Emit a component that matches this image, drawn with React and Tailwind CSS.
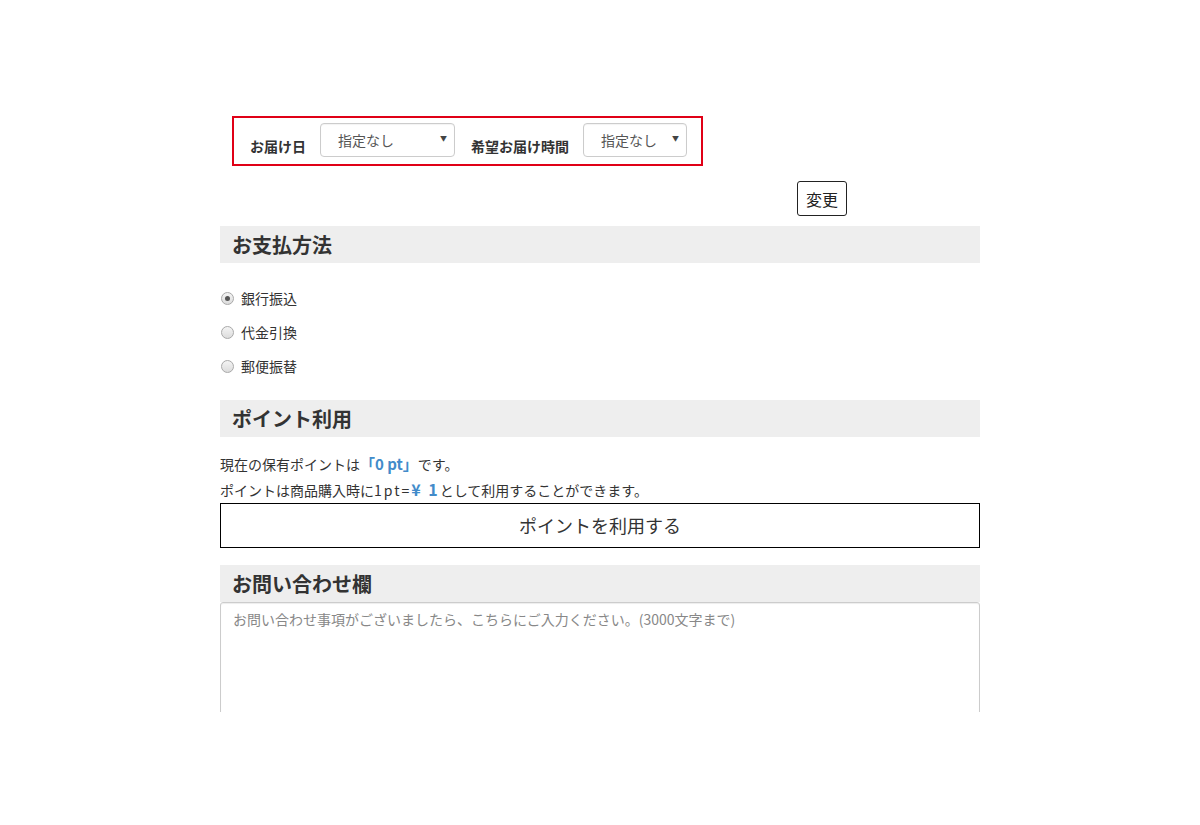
import React from "react";

function Select({ w }) {
  return (
    <div className={`relative flex h-[34px] ${w} items-center rounded-[4px] border border-[#cccccc] bg-white pl-[17px] text-[14px] text-[#555555] shadow-[inset_0_1px_1px_rgba(0,0,0,0.05)]`}>
      <span>指定なし</span>
      <span className="absolute right-[7px] top-[9px] text-[7px] leading-[10px] text-[#444]">▼</span>
    </div>
  );
}

function Radio({ checked, label }) {
  return (
    <label className="flex h-[34px] items-center gap-[7px] text-[14px] text-[#333]">
      <span className="flex h-[13px] w-[13px] items-center justify-center rounded-full border border-[#a9a9a9] bg-gradient-to-b from-[#f4f4f4] to-[#dcdcdc]">
        {checked && <span className="h-[5px] w-[5px] rounded-full bg-[#555]" />}
      </span>
      <span>{label}</span>
    </label>
  );
}

function Header({ children }) {
  return (
    <div className="flex h-[37px] items-center bg-[#eeeeee] px-[12px] text-[20px] font-bold text-[#333]">
      {children}
    </div>
  );
}

export default function App() {
  return (
    <div
      className="h-[712px] w-[1200px] overflow-hidden bg-white text-[#333]"
      style={{ fontFamily: '"Noto Sans CJK JP", "Noto Sans", sans-serif' }}
    >
      <div className="mx-auto w-[760px] pt-[116px]">
        <div className="ml-[12px] flex h-[50px] w-[471px] items-start border-2 border-[#e00016] pl-[16px] pt-[5px]">
          <span className="mt-[13px] text-[14px] font-bold text-[#333]">お届け日</span>
          <div className="ml-[14px]">
            <Select w="w-[135px]" />
          </div>
          <span className="ml-[16px] mt-[13px] text-[14px] font-bold text-[#333]">希望お届け時間</span>
          <div className="ml-[14px]">
            <Select w="w-[104px]" />
          </div>
        </div>

        <div className="mt-[15px] flex justify-end pr-[133px]">
          <button className="flex h-[35px] w-[50px] items-center justify-center rounded-[3px] border border-[#222] bg-white text-[16px] text-[#222]">
            変更
          </button>
        </div>

        <div className="mt-[10px]">
          <Header>お支払方法</Header>
        </div>
        <div className="mt-[18px] pl-[1px]">
          <Radio checked label="銀行振込" />
          <Radio label="代金引換" />
          <Radio label="郵便振替" />
        </div>

        <div className="mt-[17px]">
          <Header>ポイント利用</Header>
        </div>
        <div className="mt-[14px] text-[14px] leading-[25px] text-[#333]">
          <p>
            現在の保有ポイントは<span className="text-[15px] font-bold text-[#428bca]">「0 pt」</span>です。
          </p>
          <p>
            ポイントは商品購入時に<span className="tracking-[2px]">1pt=</span>
            <span className="text-[16px] font-bold tracking-[2px] text-[#428bca]">¥ 1</span>として利用することができます。
          </p>
        </div>
        <button className="flex h-[45px] w-full items-center justify-center border border-black bg-white text-[18px] text-[#333]">
          ポイントを利用する
        </button>

        <div className="mt-[17px]">
          <Header>お問い合わせ欄</Header>
        </div>
        <textarea
          className="block h-[200px] w-full resize-none rounded-[3px] border border-[#cccccc] px-[12px] py-[6px] text-[14px] text-[#555] placeholder:text-[#888] shadow-[inset_0_1px_1px_rgba(0,0,0,0.075)]"
          placeholder="お問い合わせ事項がございましたら、こちらにご入力ください。(3000文字まで)"
        />
      </div>
    </div>
  );
}
